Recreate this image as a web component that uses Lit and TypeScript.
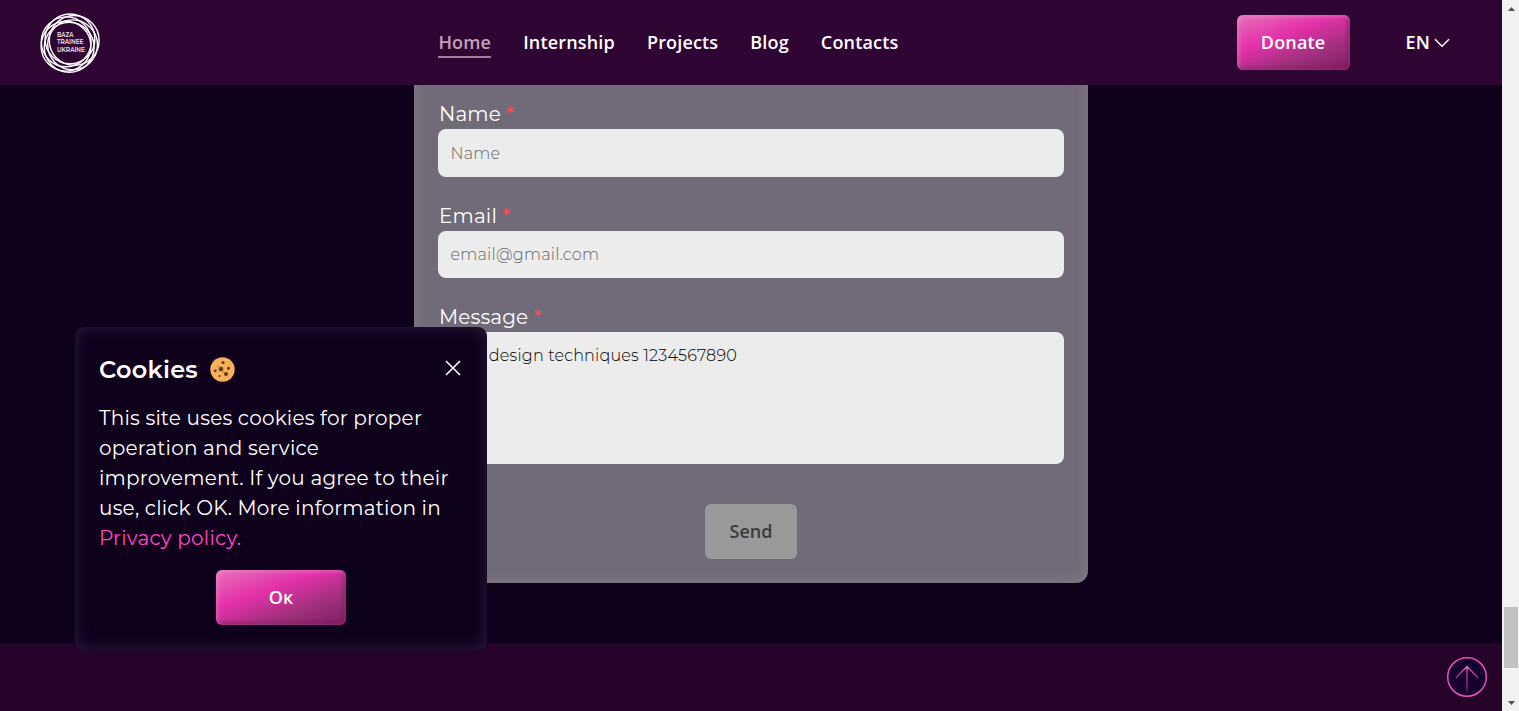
import { LitElement, html, css, svg } from "lit";
import { customElement } from "lit/decorators.js";

const RINGS = [
  [34.2, 27.4], [32.6, 31.8], [29.2, 34.3], [26, 33.2], [26.2, 28.8], [30, 25.9],
];

@customElement("app-root")
export class AppRoot extends LitElement {
  static styles = css`
    :host {
      display: flex;
      position: relative;
      width: 100%;
      height: 100vh;
      overflow: hidden;
      background: #0f001c;
      color: #fff;
      font-family: Montserrat, Inter, "Open Sans", sans-serif;
    }
    * { box-sizing: border-box; }
    button, input, textarea { font: inherit; margin: 0; border: 0; outline: 0; }
    .page { flex: 1; min-width: 0; display: flex; flex-direction: column; }
    .header {
      height: 85px;
      flex: none;
      background: #2f0533;
      display: grid;
      grid-template-columns: 398.4px 1fr 265.4px;
      align-items: center;
      padding-left: 40px;
      font: 600 18px/27px "Open Sans", sans-serif;
      letter-spacing: 0.17px;
    }
    .logo { display: block; width: 60px; height: 60px; }
    .logo text { font: 600 6.4px Montserrat, sans-serif; fill: #eee3f0; letter-spacing: 0; }
    .nav { display: flex; gap: 32px; }
    .nav a { color: #fff; border-bottom: 2px solid transparent; line-height: 28px; padding-top: 1px; }
    .nav a.active { color: #c8a0b8; border-color: #a57c9b; }
    .tools { display: flex; align-items: center; }
    .pink {
      color: #fff;
      border-radius: 6px;
      font: 600 18px/27px "Open Sans", sans-serif;
      letter-spacing: 0.17px;
      background: linear-gradient(160deg, #e667b8 0%, #e667b8 6%, #e431a8 38%, #9c307b 72%, #801c62 100%);
      box-shadow: inset 1px 1px 5px rgba(255, 190, 235, 0.45), inset -2px -2px 4px rgba(110, 5, 75, 0.65);
    }
    .donate { width: 113px; height: 55.5px; padding: 0; }
    .lang { display: flex; align-items: center; gap: 4px; margin-left: 56px; }
    .lang svg { display: block; }
    .main { flex: none; height: 558px; overflow: hidden; display: flex; justify-content: center; align-items: flex-start; }
    .card {
      width: 674px;
      margin-top: -40px;
      padding: 54.3px 24px 24px;
      border-radius: 12px;
      background: #716a78;
      box-shadow: inset 0 0 16px rgba(150, 140, 145, 0.6);
      display: flex;
      flex-direction: column;
      align-items: stretch;
    }
    .field { display: flex; flex-direction: column; margin-bottom: 24px; }
    .label { font-size: 20px; line-height: 30px; letter-spacing: 0.15px; padding-left: 1px; }
    .star { color: #ff4d4f; }
    .input {
      height: 47.3px;
      padding: 1px 12.4px 0;
      border-radius: 8px;
      background: #ececec;
      color: #000;
      font-size: 16px;
      font-weight: 300;
      letter-spacing: 0.26px;
    }
    .input::placeholder { color: #666; opacity: 1; }
    .area { height: 132px; padding: 12px; line-height: 24px; resize: none; display: block; overflow: hidden; letter-spacing: 0.2px; }
    .send {
      align-self: center;
      width: 92px;
      height: 55px;
      margin-top: 16px;
      padding: 0;
      border-radius: 6px;
      background: #999;
      color: #3b3b3b;
      font: 600 18px/27px "Open Sans", sans-serif;
    }
    .footer { flex: 1; background: #260328; }
    .up { position: absolute; left: 1446px; top: 656px; width: 42px; height: 42px; }
    .scroll {
      width: 17px;
      flex: none;
      background: #f1f1f1;
      display: flex;
      flex-direction: column;
      align-items: center;
      padding: 7px 0 6px 1px;
    }
    .scroll svg { display: block; flex: none; }
    .gap { flex: 1; }
    .thumb { width: 14px; height: 61px; background: #c1c1c1; margin-bottom: 33px; }
    .cookie {
      position: absolute;
      left: 75px;
      top: 327px;
      width: 412px;
      height: 323px;
      padding: 24px;
      border-radius: 9px;
      background: #0f001c;
      box-shadow: inset 0 0 16px rgba(90, 80, 115, 0.38);
      display: flex;
      flex-direction: column;
    }
    .head { display: flex; align-items: center; height: 37px; }
    .title { margin: 0; font-size: 24px; font-weight: 600; line-height: 36px; letter-spacing: 0.25px; }
    .bun { margin-left: 12px; }
    .close { margin-left: auto; margin-right: 2px; margin-top: -3px; }
    .text { margin: 15px 0 17px; font-size: 20px; line-height: 30px; letter-spacing: 0.21px; white-space: nowrap; }
    .policy { color: #ff47c2; }
    .ok { width: 130px; height: 55px; padding: 0 0 1px; align-self: center; }
  `;

  private logo() {
    return html`<svg class="logo" viewBox="0 0 60 60">
      ${RINGS.map(([x, y]) => svg`<circle cx=${x} cy=${y} r="24.9" fill="none" stroke="#fff" stroke-width="1.4"></circle>`)}
      <text x="17" y="23.8" textLength="16.5" lengthAdjust="spacingAndGlyphs">BAZA</text>
      <text x="17" y="31.4" textLength="26.5" lengthAdjust="spacingAndGlyphs">TRAINEE</text>
      <text x="17" y="39" textLength="28" lengthAdjust="spacingAndGlyphs">UKRAINE</text>
    </svg>`;
  }

  private label(text: string) {
    return html`<label class="label">${text} <span class="star">*</span></label>`;
  }

  render() {
    return html`
      <div class="page">
        <header class="header">
          ${this.logo()}
          <nav class="nav">
            <a class="active">Home</a><a>Internship</a><a>Projects</a><a>Blog</a><a>Contacts</a>
          </nav>
          <div class="tools">
            <button class="pink donate">Donate</button>
            <div class="lang">EN
              <svg width="16" height="10" viewBox="0 0 16 10" fill="none" stroke="#fff" stroke-width="1.5"><path d="M1 1.3 8 8.3 15 1.3"></path></svg>
            </div>
          </div>
        </header>
        <main class="main">
          <form class="card">
            <div class="field">${this.label("Name")}<input class="input" placeholder="Name" /></div>
            <div class="field">${this.label("Email")}<input class="input" placeholder="email@gmail.com" /></div>
            <div class="field">${this.label("Message")}<textarea class="input area" .value=${"web design techniques 1234567890"}></textarea></div>
            <button class="send" type="button">Send</button>
          </form>
        </main>
        <footer class="footer"></footer>
      </div>
      <div class="scroll">
        <svg width="7" height="4" viewBox="0 0 7 4"><path d="M0 4 3.5 0 7 4Z" fill="#505050"></path></svg>
        <div class="gap"></div>
        <div class="thumb"></div>
        <svg width="7" height="4" viewBox="0 0 7 4"><path d="M0 0H7L3.5 4Z" fill="#505050"></path></svg>
      </div>
      <svg class="up" viewBox="0 0 42 42" fill="none">
        <defs>
          <linearGradient id="arrow" x1="0" y1="10" x2="0" y2="36" gradientUnits="userSpaceOnUse">
            <stop offset="0" stop-color="#e27abd"></stop><stop offset=".3" stop-color="#b83496"></stop><stop offset="1" stop-color="#7d1d66"></stop>
          </linearGradient>
        </defs>
        <circle cx="21" cy="21" r="19.3" fill="#160030" stroke="#e252b4" stroke-width="1.5"></circle>
        <path d="M21 10.5V35.5M10 21.8 21 10.5 32 21.8" stroke="url(#arrow)" stroke-width="1.4"></path>
      </svg>
      <section class="cookie">
        <div class="head">
          <h2 class="title">Cookies</h2>
          <svg class="bun" width="25" height="25" viewBox="0 0 25 25">
            <circle cx="12.5" cy="12.5" r="12.2" fill="#f7b05b"></circle>
            <g fill="#5f3a0c">
              <circle cx="11" cy="12" r="2.3"></circle><circle cx="16" cy="17" r="2"></circle>
              <circle cx="13" cy="5.6" r="1.5"></circle><circle cx="18.5" cy="11.2" r="1.5"></circle>
              <circle cx="5.3" cy="13.8" r="1.4"></circle><circle cx="9.6" cy="19" r="1"></circle>
              <circle cx="8" cy="9" r=".6"></circle><circle cx="13" cy="15" r=".6"></circle>
            </g>
          </svg>
          <svg class="close" width="16" height="16" viewBox="0 0 16 16" stroke="#fff" stroke-width="1.6"><path d="M1 1 15 15M15 1 1 15"></path></svg>
        </div>
        <p class="text">This site uses cookies for proper<br />operation and service<br />improvement. If you agree to their<br />use, click OK. More information in<br /><a class="policy">Privacy policy.</a></p>
        <button class="pink ok">Ок</button>
      </section>
    `;
  }
}
